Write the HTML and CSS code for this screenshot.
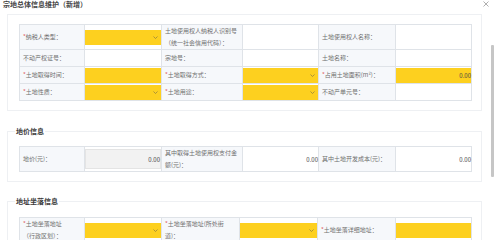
FILE: index.html
```html
<!DOCTYPE html>
<html lang="zh-CN">
<head>
<meta charset="utf-8">
<title>宗地总体信息维护（新增）</title>
<link rel="stylesheet" href="styles.css">
</head>
<body>
<div class="page">
  <div class="header">
    <div class="title">宗地总体信息维护（新增）</div>
    <svg class="close" width="6" height="6" viewBox="0 0 6 6"><path d="M0.5 0.5L5.5 5.5M5.5 0.5L0.5 5.5" stroke="#9a9a9a" stroke-width="0.8" fill="none"/></svg>
  </div>
  <div class="content">
    <div class="panel">
      <table class="grid">
        <colgroup><col class="c1"><col class="c2"><col class="c3"><col class="c4"><col class="c5"><col class="c6"></colgroup>
        <tr class="r-tall">
          <td class="lbl"><span class="req">*</span>纳税人类型：</td>
          <td class="val"><div class="inp yel sel"><svg width="5" height="3" viewBox="0 0 5 3"><path d="M0.5 0.5L2.5 2.5L4.5 0.5" stroke="#8a7a40" stroke-width="0.7" fill="none"/></svg></div></td>
          <td class="lbl">土地使用权人纳税人识别号<br>（统一社会信用代码）：</td>
          <td class="val"><div class="inp"></div></td>
          <td class="lbl">土地使用权人名称：</td>
          <td class="val"><div class="inp"></div></td>
        </tr>
        <tr class="r">
          <td class="lbl">不动产权证号：</td>
          <td class="val"><div class="inp"></div></td>
          <td class="lbl">宗地号：</td>
          <td class="val"><div class="inp"></div></td>
          <td class="lbl">土地名称：</td>
          <td class="val"><div class="inp"></div></td>
        </tr>
        <tr class="r">
          <td class="lbl"><span class="req">*</span>土地取得时间：</td>
          <td class="val"><div class="inp yel"></div></td>
          <td class="lbl"><span class="req">*</span>土地取得方式：</td>
          <td class="val"><div class="inp yel sel"><svg width="5" height="3" viewBox="0 0 5 3"><path d="M0.5 0.5L2.5 2.5L4.5 0.5" stroke="#8a7a40" stroke-width="0.7" fill="none"/></svg></div></td>
          <td class="lbl"><span class="req">*</span>占用土地面积(m²)：</td>
          <td class="val"><div class="inp yel num">0.00</div></td>
        </tr>
        <tr class="r">
          <td class="lbl"><span class="req">*</span>土地性质：</td>
          <td class="val"><div class="inp yel sel"><svg width="5" height="3" viewBox="0 0 5 3"><path d="M0.5 0.5L2.5 2.5L4.5 0.5" stroke="#8a7a40" stroke-width="0.7" fill="none"/></svg></div></td>
          <td class="lbl"><span class="req">*</span>土地用途：</td>
          <td class="val"><div class="inp yel sel"><svg width="5" height="3" viewBox="0 0 5 3"><path d="M0.5 0.5L2.5 2.5L4.5 0.5" stroke="#8a7a40" stroke-width="0.7" fill="none"/></svg></div></td>
          <td class="lbl">不动产单元号：</td>
          <td class="val"><div class="inp"></div></td>
        </tr>
      </table>
    </div>

    <div class="fieldset fs-price">
      <div class="legend">地价信息</div>
      <table class="grid">
        <colgroup><col class="c1"><col class="c2"><col class="c3"><col class="c4"><col class="c5"><col class="c6"></colgroup>
        <tr class="r-tall">
          <td class="lbl">地价(元)：</td>
          <td class="val"><div class="inp tall dis num">0.00</div></td>
          <td class="lbl">其中取得土地使用权支付金<br>额(元)：</td>
          <td class="val"><div class="inp tall num">0.00</div></td>
          <td class="lbl">其中土地开发成本(元)：</td>
          <td class="val"><div class="inp tall num">0.00</div></td>
        </tr>
      </table>
    </div>

    <div class="fieldset fs-addr">
      <div class="legend">地址坐落信息</div>
      <table class="grid">
        <colgroup><col class="c1"><col class="c2"><col class="d3"><col class="d4"><col class="d5"><col class="c6"></colgroup>
        <tr class="r-tall">
          <td class="lbl"><span class="req">*</span>土地坐落地址<br>（行政区划）：</td>
          <td class="val"><div class="inp yel sel"><svg width="5" height="3" viewBox="0 0 5 3"><path d="M0.5 0.5L2.5 2.5L4.5 0.5" stroke="#8a7a40" stroke-width="0.7" fill="none"/></svg></div></td>
          <td class="lbl"><span class="req">*</span>土地坐落地址(所处街<br>道)：</td>
          <td class="val"><div class="inp yel sel"><svg width="5" height="3" viewBox="0 0 5 3"><path d="M0.5 0.5L2.5 2.5L4.5 0.5" stroke="#8a7a40" stroke-width="0.7" fill="none"/></svg></div></td>
          <td class="lbl"><span class="req">*</span>土地坐落详细地址：</td>
          <td class="val"><div class="inp yel"></div></td>
        </tr>
      </table>
    </div>
  </div>
  <div class="scroll-thumb"></div>
</div>
</body>
</html>
```

FILE: styles.css
```css
* { box-sizing: border-box; }
html, body { margin: 0; padding: 0; background: #fff; }
body {
  font-family: "Noto Sans CJK SC", "Noto Sans", sans-serif;
  font-size: 6px;
  color: #6b6b6b;
  width: 499px;
  height: 240px;
  overflow: hidden;
}
.page { position: relative; width: 499px; height: 240px; overflow: hidden; }

.header {
  height: 14px;
  display: flex;
  justify-content: space-between;
  align-items: flex-start;
  padding: 0 10px 0 3px;
}
.title {
  font-size: 7px;
  line-height: 9px;
  color: #444;
  font-weight: 700;
}
.close { margin-top: 1px; }

.content { padding: 0 17px 0 7px; }

.panel {
  border: 1px solid #eef0f3;
  padding: 9px 10px 9px 11px;
}

.fieldset {
  border: 1px solid #eef0f3;
  padding: 0 10px 9px 11px;
}
.fs-price { margin-top: 20px; }
.fs-addr { margin-top: 19px; }
.legend {
  width: max-content;
  margin: -5px 0 0 -4px;
  padding: 0 1px;
  background: #fff;
  font-size: 7px;
  line-height: 9px;
  font-weight: 700;
  color: #3a3a3a;
}
.fs-price .grid { margin-top: 10px; }
.fs-addr .grid { margin-top: 11px; }

.grid {
  border-collapse: collapse;
  table-layout: fixed;
  width: 452px;
}
.c1 { width: 65px; }
.c2 { width: 77px; }
.c3 { width: 81px; }
.c4 { width: 76px; }
.c5 { width: 77px; }
.c6 { width: 76px; }
.d3 { width: 78px; }
.d4 { width: 78px; }
.d5 { width: 78px; }

.grid td {
  border: 1px solid #dfe3e8;
  padding: 0;
  vertical-align: middle;
}
.r-tall td { height: 25px; }
.r td { height: 17px; }

.lbl {
  background: #f6f8fb;
  padding: 0 3px !important;
  line-height: 12px;
  color: #707070;
  white-space: nowrap;
  overflow: hidden;
}
.req { color: #e06060; }

.val { background: #fff; }
.inp {
  height: 15px;
  width: 100%;
  display: flex;
  align-items: center;
  justify-content: flex-end;
  padding-right: 3px;
  color: #444;
}
.inp.tall { height: 20px; }
.yel { background: #fdd01f; }
.dis { background: #f2f2f2; border: 1px solid #e4e4e4; }
.num { padding-right: 0; margin-right: -1px; }
.sel svg { display: block; }

.scroll-thumb {
  position: absolute;
  left: 491px;
  top: 45px;
  width: 3px;
  height: 132px;
  background: #c6c6c6;
  border-radius: 1px;
}
```
